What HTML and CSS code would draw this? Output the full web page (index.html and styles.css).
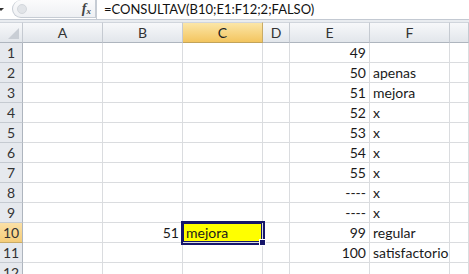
FILE: index.html
```html
<!DOCTYPE html>
<html>
<head>
<meta charset="utf-8">
<link rel="stylesheet" href="styles.css">
</head>
<body>
<div class="fbar">
  <div class="namebox"><span class="arrow"></span></div>
  <div class="fxbox">
    <span class="grip"></span>
    <span class="fx">f<sub>x</sub></span>
  </div>
  <div class="formula">=CONSULTAV(B10;E1:F12;2;FALSO)</div>
</div>
<div class="spacer"></div>
<div class="grid">
  <div class="h corner"><span class="tri"></span></div>
  <div class="h">A</div><div class="h">B</div><div class="h sel">C</div><div class="h">D</div><div class="h">E</div><div class="h">F</div><div class="h last"></div>

  <div class="r">1</div><div class="c"></div><div class="c"></div><div class="c"></div><div class="c"></div><div class="c n">49</div><div class="c"></div><div class="c last"></div>
  <div class="r">2</div><div class="c"></div><div class="c"></div><div class="c"></div><div class="c"></div><div class="c n">50</div><div class="c">apenas</div><div class="c last"></div>
  <div class="r">3</div><div class="c"></div><div class="c"></div><div class="c"></div><div class="c"></div><div class="c n">51</div><div class="c">mejora</div><div class="c last"></div>
  <div class="r">4</div><div class="c"></div><div class="c"></div><div class="c"></div><div class="c"></div><div class="c n">52</div><div class="c">x</div><div class="c last"></div>
  <div class="r">5</div><div class="c"></div><div class="c"></div><div class="c"></div><div class="c"></div><div class="c n">53</div><div class="c">x</div><div class="c last"></div>
  <div class="r">6</div><div class="c"></div><div class="c"></div><div class="c"></div><div class="c"></div><div class="c n">54</div><div class="c">x</div><div class="c last"></div>
  <div class="r">7</div><div class="c"></div><div class="c"></div><div class="c"></div><div class="c"></div><div class="c n">55</div><div class="c">x</div><div class="c last"></div>
  <div class="r">8</div><div class="c"></div><div class="c"></div><div class="c"></div><div class="c"></div><div class="c n">----</div><div class="c">x</div><div class="c last"></div>
  <div class="r">9</div><div class="c"></div><div class="c"></div><div class="c"></div><div class="c"></div><div class="c n">----</div><div class="c">x</div><div class="c last"></div>
  <div class="r rsel">10</div><div class="c"></div><div class="c n">51</div><div class="c active">mejora</div><div class="c"></div><div class="c n">99</div><div class="c">regular</div><div class="c last"></div>
  <div class="r">11</div><div class="c"></div><div class="c"></div><div class="c"></div><div class="c"></div><div class="c n">100</div><div class="c">satisfactorio</div><div class="c last"></div>
  <div class="r">12</div><div class="c"></div><div class="c"></div><div class="c"></div><div class="c"></div><div class="c"></div><div class="c"></div><div class="c last"></div>
</div>
</body>
</html>
```
FILE: styles.css
```css
html, body {
  margin: 0;
  padding: 0;
  background: #ffffff;
  overflow: hidden;
}
body {
  font-family: Lato, "Liberation Sans", Arial, sans-serif;
  font-size: 14px;
  color: #1a1a1a;
}
.fbar {
  display: flex;
  height: 19px;
  border-bottom: 1px solid #c3c9d2;
  background: #ffffff;
}
.namebox {
  width: 12px;
  display: flex;
  align-items: center;
}
.arrow {
  width: 0;
  height: 0;
  border-left: 3px solid transparent;
  border-right: 3px solid transparent;
  border-top: 3px solid #333;
  margin-left: -2px;
}
.fxbox {
  width: 84px;
  height: 18px;
  box-sizing: border-box;
  border: 1px solid #c6ccd4;
  border-top: none;
  border-top-left-radius: 9px;
  border-bottom-left-radius: 9px;
  background: linear-gradient(#fbfbfc, #eef0f3);
  display: flex;
  align-items: center;
  justify-content: space-between;
  padding: 0 4px 0 4px;
}
.grip {
  width: 8px;
  height: 8px;
  border-radius: 50%;
  background: #e1e4e8;
  border: 1px solid #d3d7dc;
}
.fx {
  font-family: "Liberation Serif", "Times New Roman", serif;
  font-style: italic;
  font-weight: bold;
  font-size: 14px;
  color: #444;
  line-height: 1;
}
.fx sub {
  font-size: 9px;
  vertical-align: -1px;
}
.formula {
  flex: 1;
  border-left: 1px solid #c6ccd4;
  padding-left: 7px;
  line-height: 19px;
  font-size: 13px;
  color: #111;
  white-space: nowrap;
}
.spacer {
  height: 2px;
  background: #e9ecf0;
}
.grid {
  display: grid;
  grid-template-columns: 23px 80px 80px 80px 27px 80px 80px 1fr;
  grid-template-rows: 21px repeat(12, 20px);
}
.h {
  box-sizing: border-box;
  border-right: 1px solid #c5cad1;
  border-bottom: 1px solid #aeb5be;
  border-top: 1px solid #d0d5dc;
  background: linear-gradient(#f7f8fa, #e2e6eb);
  color: #333;
  text-align: center;
  line-height: 19px;
}
.h.sel {
  background: linear-gradient(#fbe6a8, #f3c55f);
  border-bottom: 1px solid #c2a35a;
  border-right-color: #c9ab66;
  color: #222;
}
.corner {
  position: relative;
}
.tri {
  position: absolute;
  right: 3px;
  bottom: 3px;
  width: 0;
  height: 0;
  border-left: 11px solid transparent;
  border-bottom: 11px solid #c9ced5;
}
.r {
  box-sizing: border-box;
  border-right: 1px solid #aeb5be;
  border-bottom: 1px solid #c5cad1;
  background: #e6e9ee;
  color: #333;
  text-align: center;
  line-height: 19px;
}
.r.rsel {
  background: linear-gradient(#fbe0a6, #f5cd7a);
  border-bottom-color: #c9ab66;
}
.c {
  box-sizing: border-box;
  border-right: 1px solid #dadcdf;
  border-bottom: 1px solid #dadcdf;
  line-height: 19px;
  padding: 0 3px;
  white-space: nowrap;
}
.c.n {
  text-align: right;
}
.c.active {
  position: relative;
  background: #ffff00;
  outline: 2px solid #16166a;
  box-shadow: inset 0 0 0 1px #16166a;
}
.c.active::after {
  content: "";
  position: absolute;
  right: -4px;
  bottom: -4px;
  width: 5px;
  height: 5px;
  background: #16166a;
  border: 1px solid #ffffff;
}
```
